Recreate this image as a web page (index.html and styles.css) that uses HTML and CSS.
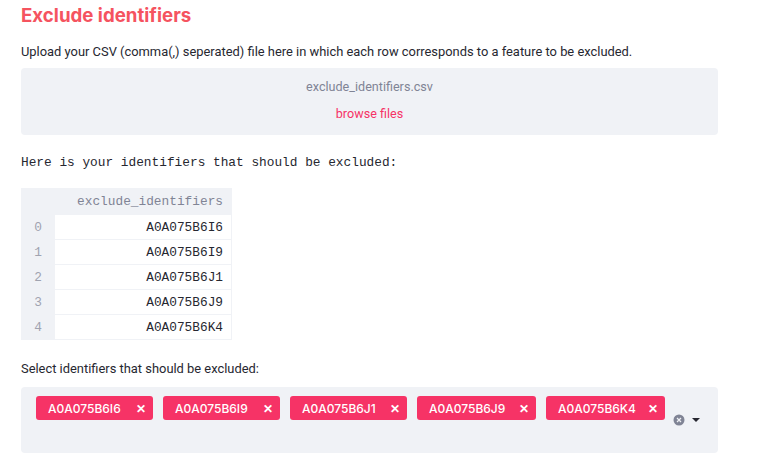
FILE: index.html
```html
<!DOCTYPE html>
<html>
<head>
<meta charset="utf-8">
<link rel="stylesheet" href="styles.css">
</head>
<body>
<div class="main">
  <h1 class="title">Exclude identifiers</h1>
  <p class="desc">Upload your CSV (comma(,) seperated) file here in which each row corresponds to a feature to be excluded.</p>
  <div class="upload">
    <div class="fname">exclude_identifiers.csv</div>
    <div class="browse">browse files</div>
  </div>
  <pre class="mono">Here is your identifiers that should be excluded:</pre>
  <table class="df">
    <thead><tr><th class="idx"></th><th>exclude_identifiers</th></tr></thead>
    <tbody>
      <tr><th class="idx">0</th><td>A0A075B6I6</td></tr>
      <tr><th class="idx">1</th><td>A0A075B6I9</td></tr>
      <tr><th class="idx">2</th><td>A0A075B6J1</td></tr>
      <tr><th class="idx">3</th><td>A0A075B6J9</td></tr>
      <tr><th class="idx">4</th><td>A0A075B6K4</td></tr>
    </tbody>
  </table>
  <div class="label">Select identifiers that should be excluded:</div>
  <div class="multi">
    <div class="tags">
      <span class="tag">A0A075B6I6<span class="x">✕</span></span>
      <span class="tag">A0A075B6I9<span class="x">✕</span></span>
      <span class="tag">A0A075B6J1<span class="x">✕</span></span>
      <span class="tag">A0A075B6J9<span class="x">✕</span></span>
      <span class="tag">A0A075B6K4<span class="x">✕</span></span>
    </div>
    <div class="controls">
      <svg class="clear" width="12" height="12" viewBox="0 0 12 12"><circle cx="6" cy="6" r="5.5" fill="#808495"/><path d="M4 4L8 8M8 4L4 8" stroke="#f0f2f6" stroke-width="1.2"/></svg>
      <svg class="caret" width="10" height="6" viewBox="0 0 10 6"><path d="M1 1L5 5L9 1Z" fill="#262730"/></svg>
    </div>
  </div>
</div>
</body>
</html>
```
FILE: styles.css
```css
html, body { margin: 0; padding: 0; background: #fff; }
body { font-family: Roboto, "Liberation Sans", sans-serif; color: #262730; }
.main { width: 697px; padding: 0 21px; }
.title { margin: 0; padding-top: 4px; height: 26px; font-size: 18.7px; font-weight: 700; color: #f5535f; font-family: Inter, Roboto, sans-serif; letter-spacing: 0; line-height: 24px; }
.desc { margin: 13px 0 0; font-size: 12.9px; line-height: 17px; }
.upload { margin-top: 8px; height: 67px; background: #f0f2f6; border-radius: 4px; display: flex; flex-direction: column; align-items: center; }
.fname { margin-top: 11px; font-size: 12.6px; color: #808495; line-height: 16px; }
.browse { margin-top: 11px; font-size: 12.6px; color: #f63366; line-height: 16px; }
.mono { margin: 20px 0 0; font-family: "Liberation Mono", monospace; font-size: 12.8px; line-height: 16px; color: #262730; }
.df { margin-top: 17px; border-collapse: collapse; font-family: "Liberation Mono", monospace; font-size: 12.8px; }
.df th, .df td { height: 25px; padding: 0 8px; border: 1px solid #f0f2f6; box-sizing: border-box; font-weight: 400; text-align: right; }
.df thead th { background: #f0f2f6; color: #808495; height: 26px; }
.df th.idx { background: #f0f2f6; color: #a0a3b0; width: 33px; text-align: center; }
.df td { width: 177px; color: #262730; }
.label { margin-top: 21px; font-size: 12.9px; line-height: 16px; }
.multi { margin-top: 10px; height: 66px; background: #f0f2f6; border-radius: 4px; display: flex; align-items: flex-start; padding: 9px 0 0 15px; box-sizing: border-box; }
.tags { display: flex; gap: 10px; }
.tag { height: 24px; width: 117px; box-sizing: border-box; background: #f63366; color: #fff; border-radius: 3px; font-size: 12px; font-weight: 500; display: flex; align-items: center; justify-content: space-between; padding: 0 7px 0 12px; font-family: Inter, Roboto, sans-serif; }
.tag:nth-child(4), .tag:nth-child(5) { width: 119px; }
.x { font-size: 12px; font-weight: 700; }
.controls { display: flex; align-items: center; gap: 6px; margin-left: 8px; margin-top: 18px; }
```
